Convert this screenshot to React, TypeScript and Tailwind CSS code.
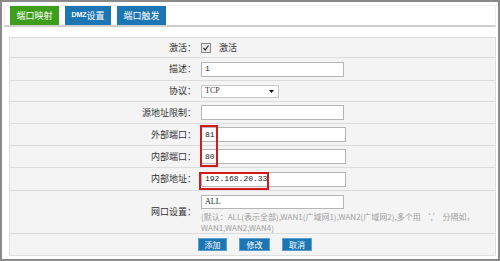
import React from "react";

const cjk = { fontFamily: '"Noto Sans CJK SC", "Noto Sans", sans-serif' };
const mono = { fontFamily: '"Liberation Mono", "Noto Sans CJK SC", monospace' };

function Row({ label, h, children, last }: { label: string; h: string; children?: React.ReactNode; last?: boolean }) {
  return (
    <div className={`flex ${h} ${last ? "" : "border-b border-b-[#dcdcdc]"}`}>
      <div className="w-[186px] flex items-center justify-end text-[9px] text-[#333]" style={cjk}>
        {label}
      </div>
      <div className="flex-1 flex items-center pl-[5px]">{children}</div>
    </div>
  );
}

function Input({ value, w = "w-[145px]" }: { value?: string; w?: string }) {
  return (
    <div className={`${w} h-[15px] border border-[#b5b5b5] bg-white flex items-center pl-[3px] text-[8px] text-[#222]`} style={mono}>
      {value}
    </div>
  );
}

export default function App() {
  return (
    <div className="w-[500px] h-[261px] border-2 border-[#8a8a8a] bg-white relative overflow-hidden" style={cjk}>
      <div className="mx-[2px] mt-[3px] h-[22px] border border-[#efefef] border-b-2 border-b-[#cfcfcf] flex items-end pl-[5px] gap-[6px]">
        <div className="w-[49px] h-[19px] bg-[#3c9e1a] text-white text-[9px] flex items-center justify-center">端口映射</div>
        <div className="w-[46px] h-[19px] bg-[#1b76b3] text-white text-[9px] flex items-center justify-center">
          <span className="text-[7px] font-bold" style={{ fontFamily: '"Liberation Sans", sans-serif' }}>DMZ</span>设置
        </div>
        <div className="w-[49px] h-[19px] bg-[#1b76b3] text-white text-[9px] flex items-center justify-center">端口触发</div>
      </div>

      <div className="ml-[7px] mt-[10px] w-[487px] border border-[#dedede] bg-[#f4f4f4] relative">
        <Row label="激活：" h="h-[20px]">
          <div className="w-[10px] h-[10px] border border-[#8a8a8a] bg-[#e8e8e8] flex items-center justify-center">
            <svg width="8" height="8" viewBox="0 0 8 8">
              <path d="M1.5 4 L3.2 6 L6.5 1.5" stroke="#333" strokeWidth="1.2" fill="none" />
            </svg>
          </div>
          <span className="ml-[8px] text-[9px] text-[#333]">激活</span>
        </Row>
        <Row label="描述：" h="h-[23px]">
          <Input value="1" w="w-[143px]" />
        </Row>
        <Row label="协议：" h="h-[21px]">
          <div className="w-[78px] h-[13px] border border-[#c8c8c8] bg-white flex items-center justify-between pl-[3px] pr-[4px] text-[8px] text-[#333]" style={{ fontFamily: '"Liberation Serif", serif' }}>
            <span>TCP</span>
            <svg width="5" height="3" viewBox="0 0 5 3">
              <path d="M0 0 L5 0 L2.5 3 Z" fill="#111" />
            </svg>
          </div>
        </Row>
        <Row label="源地址限制：" h="h-[22px]">
          <Input w="w-[143px]" />
        </Row>
        <Row label="外部端口：" h="h-[22px]">
          <Input value="81" />
        </Row>
        <Row label="内部端口：" h="h-[22px]">
          <Input value="80" />
        </Row>
        <Row label="内部地址：" h="h-[23px]">
          <Input value="192.168.20.33" />
        </Row>
        <div className="flex h-[43px] border-b border-b-[#dcdcdc]">
          <div className="w-[186px] flex items-center justify-end text-[9px] text-[#333]">网口设置：</div>
          <div className="flex-1 pl-[5px] pt-[4px]">
            <div className="w-[143px] h-[14px] border border-[#b5b5b5] bg-white flex items-center pl-[3px] text-[8px] text-[#222]" style={{ fontFamily: '"Liberation Serif", serif' }}>
              ALL
            </div>
            <div className="mt-[2px] text-[8px] leading-[11px] text-[#a0a0a0] whitespace-nowrap">
              (默认：ALL(表示全部),WAN1(广域网1),WAN2(广域网2),多个用 ‘,’ 分隔如，
              <br />
              WAN1,WAN2,WAN4)
            </div>
          </div>
        </div>
        <div className="flex h-[21px] items-center pl-[188px] gap-[12px]">
          <div className="w-[29px] h-[13px] bg-[#1b76b3] border border-[#5ba0d0] text-white text-[8px] flex items-center justify-center">添加</div>
          <div className="w-[31px] h-[13px] bg-[#1b76b3] border border-[#5ba0d0] text-white text-[8px] flex items-center justify-center">修改</div>
          <div className="w-[30px] h-[13px] bg-[#1b76b3] border border-[#5ba0d0] text-white text-[8px] flex items-center justify-center">取消</div>
        </div>

        <div className="absolute left-[190px] top-[87px] w-[18px] h-[42px] border-2 border-[#d21a1a]" />
        <div className="absolute left-[189px] top-[134px] w-[70px] h-[18px] border-2 border-[#d21a1a]" />
      </div>
    </div>
  );
}
